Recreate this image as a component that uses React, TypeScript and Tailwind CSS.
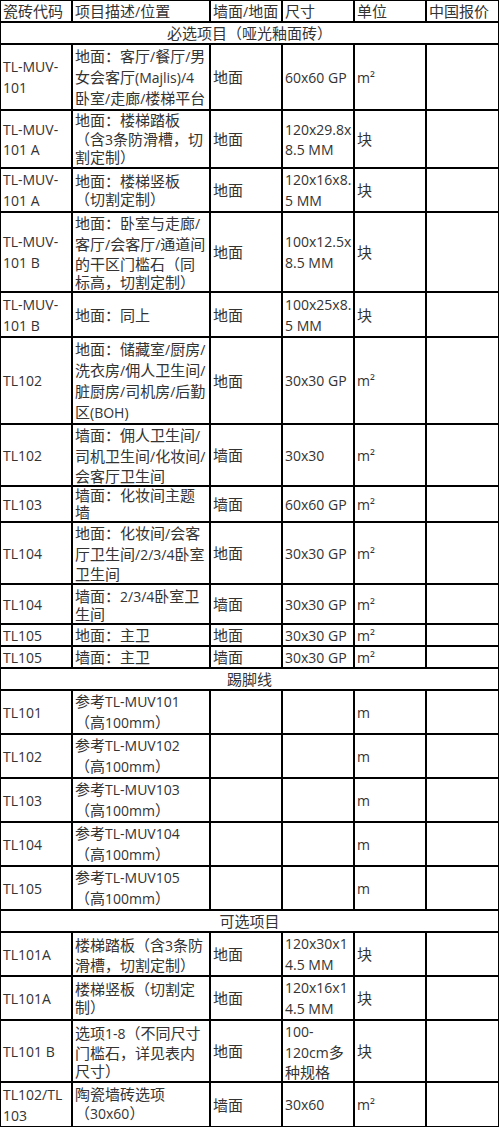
import React from "react";

type Row = {
  code: string[];
  desc: string[];
  pos: string;
  size: string[];
  unit: string;
  h: string;
  tight?: boolean;
};

const hasLatin = (s: string) => /[\x00-\x7F²]/.test(s);

function runs(line: string) {
  const parts = line.split(/([\x00-\x7F²]+)/).filter((p) => p.length > 0);
  return parts.map((p, i) =>
    hasLatin(p) ? (
      <span key={i} className="text-[14px]">
        {p}
      </span>
    ) : (
      <span key={i}>{p}</span>
    )
  );
}

function Lines({ lines, tight }: { lines: string[]; tight?: boolean }) {
  return (
    <>
      {lines.map((l, i) => (
        <div
          key={i}
          className={
            hasLatin(l)
              ? tight
                ? "h-[20px] leading-[20px] whitespace-nowrap"
                : "h-[21px] leading-[21px] whitespace-nowrap"
              : tight
              ? "h-[17px] leading-[17px] whitespace-nowrap"
              : "h-[18px] leading-[18px] whitespace-nowrap"
          }
        >
          {runs(l)}
        </div>
      ))}
    </>
  );
}

const part1: Row[] = [
  { code: ["TL-MUV-", "101"], desc: ["地面：客厅/餐厅/男", "女会客厅(Majlis)/4", "卧室/走廊/楼梯平台"], pos: "地面", size: ["60x60 GP"], unit: "m²", h: "h-[66px]" },
  { code: ["TL-MUV-", "101 A"], desc: ["地面：楼梯踏板", "（含3条防滑槽，切", "割定制）"], pos: "地面", size: ["120x29.8x", "8.5 MM"], unit: "块", h: "h-[58px]", tight: true },
  { code: ["TL-MUV-", "101 A"], desc: ["地面：楼梯竖板", "（切割定制）"], pos: "地面", size: ["120x16x8.", "5 MM"], unit: "块", h: "h-[44px]" },
  { code: ["TL-MUV-", "101 B"], desc: ["地面：卧室与走廊/", "客厅/会客厅/通道间", "的干区门槛石（同", "标高，切割定制）"], pos: "地面", size: ["100x12.5x", "8.5 MM"], unit: "块", h: "h-[80px]" },
  { code: ["TL-MUV-", "101 B"], desc: ["地面：同上"], pos: "地面", size: ["100x25x8.", "5 MM"], unit: "块", h: "h-[45px]" },
  { code: ["TL102"], desc: ["地面：储藏室/厨房/", "洗衣房/佣人卫生间/", "脏厨房/司机房/后勤", "区(BOH)"], pos: "地面", size: ["30x30 GP"], unit: "m²", h: "h-[87px]" },
  { code: ["TL102"], desc: ["墙面：佣人卫生间/", "司机卫生间/化妆间/", "会客厅卫生间"], pos: "墙面", size: ["30x30"], unit: "m²", h: "h-[62px]" },
  { code: ["TL103"], desc: ["墙面：化妆间主题", "墙"], pos: "墙面", size: ["60x60 GP"], unit: "m²", h: "h-[36px]", tight: true },
  { code: ["TL104"], desc: ["地面：化妆间/会客", "厅卫生间/2/3/4卧室", "卫生间"], pos: "地面", size: ["30x30 GP"], unit: "m²", h: "h-[62px]" },
  { code: ["TL104"], desc: ["墙面：2/3/4卧室卫", "生间"], pos: "墙面", size: ["30x30 GP"], unit: "m²", h: "h-[40px]", tight: true },
  { code: ["TL105"], desc: ["地面：主卫"], pos: "地面", size: ["30x30 GP"], unit: "m²", h: "h-[22px]", tight: true },
  { code: ["TL105"], desc: ["墙面：主卫"], pos: "墙面", size: ["30x30 GP"], unit: "m²", h: "h-[22px]", tight: true },
];

const part2: Row[] = ["101", "102", "103", "104", "105"].map((n) => ({
  code: ["TL" + n],
  desc: ["参考TL-MUV" + n, "（高100mm）"],
  pos: "",
  size: [],
  unit: "m",
  h: "h-[44px]",
}));

const part3: Row[] = [
  { code: ["TL101A"], desc: ["楼梯踏板（含3条防", "滑槽，切割定制）"], pos: "地面", size: ["120x30x1", "4.5 MM"], unit: "块", h: "h-[44px]" },
  { code: ["TL101A"], desc: ["楼梯竖板（切割定", "制）"], pos: "地面", size: ["120x16x1", "4.5 MM"], unit: "块", h: "h-[44px]" },
  { code: ["TL101 B"], desc: ["选项1-8（不同尺寸", "门槛石，详见表内", "尺寸）"], pos: "地面", size: ["100-", "120cm多", "种规格"], unit: "块", h: "h-[62px]" },
  { code: ["TL102/TL", "103"], desc: ["陶瓷墙砖选项", "（30x60）"], pos: "墙面", size: ["30x60"], unit: "m²", h: "h-[45px]" },
];

const td = "border border-black align-middle pl-[2px] pr-0 py-0 text-left";

function DataRow({ r }: { r: Row }) {
  return (
    <tr className={r.h}>
      <td className={td}>
        <Lines lines={r.code} tight={r.tight} />
      </td>
      <td className={td}>
        <Lines lines={r.desc} tight={r.tight} />
      </td>
      <td className={td}>{r.pos ? <Lines lines={[r.pos]} tight={r.tight} /> : null}</td>
      <td className={td}>
        <Lines lines={r.size} tight={r.tight} />
      </td>
      <td className={td}>
        <Lines lines={[r.unit]} tight={r.tight} />
      </td>
      <td className={td}></td>
    </tr>
  );
}

function Section({ title }: { title: string }) {
  return (
    <tr className="h-[22px]">
      <td colSpan={6} className="border border-black align-middle p-0 text-center">
        <div className="h-[20px] leading-[20px] whitespace-nowrap">{title}</div>
      </td>
    </tr>
  );
}

export default function App() {
  return (
    <div className="w-[499px] bg-white">
      <table className="w-[499px] table-fixed border-separate border-spacing-0 text-[15px] text-[#333] font-['Open_Sans','Noto_Sans_CJK_SC',sans-serif]">
        <colgroup>
          <col className="w-[72px]" />
          <col className="w-[138px]" />
          <col className="w-[72px]" />
          <col className="w-[72px]" />
          <col className="w-[72px]" />
          <col className="w-[73px]" />
        </colgroup>
        <tbody>
          <tr className="h-[22px]">
            <td className={td}>
              <Lines lines={["瓷砖代码"]} tight />
            </td>
            <td className={td}>
              <Lines lines={["项目描述/位置"]} tight />
            </td>
            <td className={td}>
              <Lines lines={["墙面/地面"]} tight />
            </td>
            <td className={td}>
              <Lines lines={["尺寸"]} tight />
            </td>
            <td className={td}>
              <Lines lines={["单位"]} tight />
            </td>
            <td className={td}>
              <Lines lines={["中国报价"]} tight />
            </td>
          </tr>
          <Section title="必选项目（哑光釉面砖）" />
          {part1.map((r, i) => (
            <DataRow key={"a" + i} r={r} />
          ))}
          <Section title="踢脚线" />
          {part2.map((r, i) => (
            <DataRow key={"b" + i} r={r} />
          ))}
          <Section title="可选项目" />
          {part3.map((r, i) => (
            <DataRow key={"c" + i} r={r} />
          ))}
        </tbody>
      </table>
    </div>
  );
}
